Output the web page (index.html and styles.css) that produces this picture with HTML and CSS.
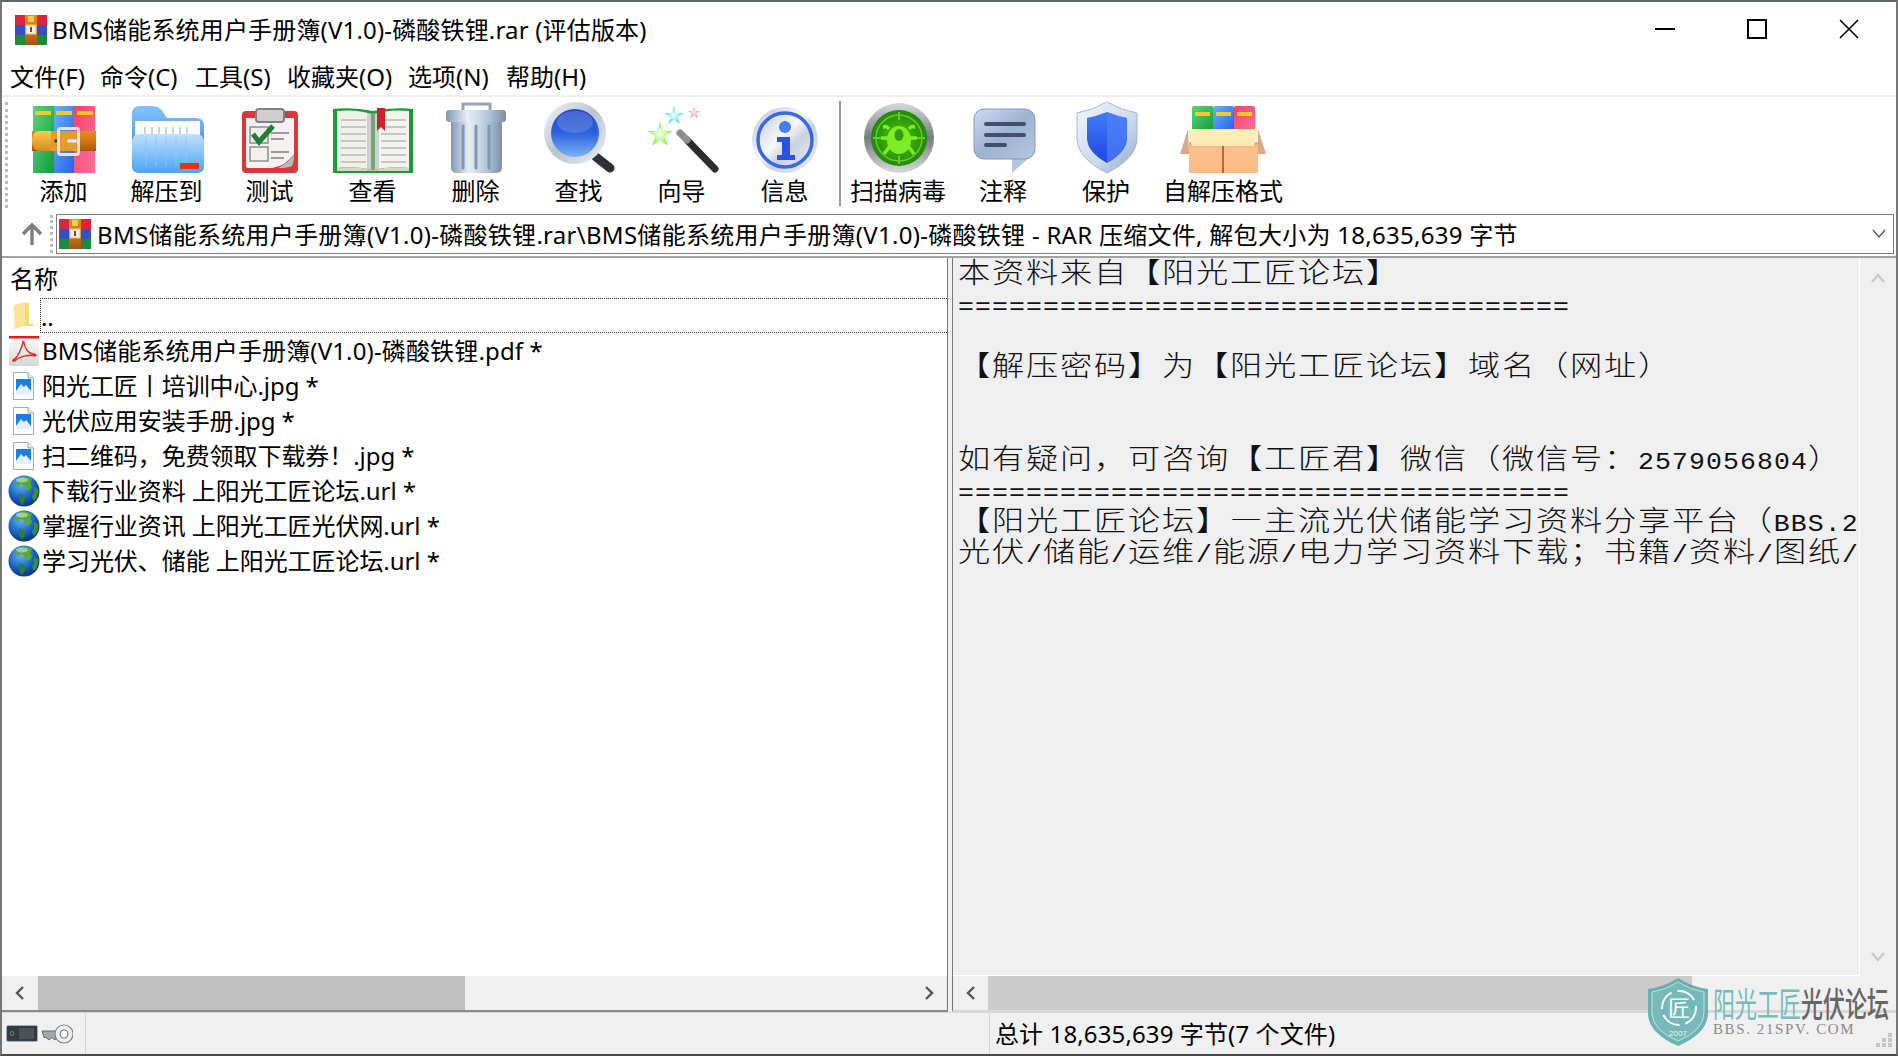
FILE: index.html
```html
<!DOCTYPE html>
<html lang="zh-CN">
<head>
<meta charset="utf-8">
<title>BMS储能系统用户手册簿(V1.0)-磷酸铁锂.rar (评估版本)</title>
<link rel="stylesheet" href="styles.css">
</head>
<body>
<svg class="defs" aria-hidden="true">
  <defs>
    <linearGradient id="gGreen" x1="0" y1="0" x2="1" y2="1"><stop offset="0" stop-color="#55d67a"/><stop offset="1" stop-color="#169a3e"/></linearGradient>
    <linearGradient id="gBlue" x1="0" y1="0" x2="1" y2="1"><stop offset="0" stop-color="#66b2fb"/><stop offset="1" stop-color="#2a60e8"/></linearGradient>
    <linearGradient id="gRed" x1="0" y1="0" x2="1" y2="1"><stop offset="0" stop-color="#f5426a"/><stop offset="1" stop-color="#fb6f9c"/></linearGradient>
    <linearGradient id="gBelt" x1="0" y1="0" x2="0" y2="1"><stop offset="0" stop-color="#e88a1e"/><stop offset=".5" stop-color="#d9750f"/><stop offset="1" stop-color="#a5560c"/></linearGradient>
    <linearGradient id="gBeltL" x1="0" y1="0" x2="0" y2="1"><stop offset="0" stop-color="#fbc851"/><stop offset="1" stop-color="#dc8a1a"/></linearGradient>
    <linearGradient id="gFolder" x1="0" y1="0" x2="0" y2="1"><stop offset="0" stop-color="#bfe0fc"/><stop offset="1" stop-color="#4aa4f6"/></linearGradient>
    <linearGradient id="gFolderTab" x1="0" y1="0" x2="0" y2="1"><stop offset="0" stop-color="#7fc4fb"/><stop offset="1" stop-color="#3b6ff0"/></linearGradient>
    <linearGradient id="gMetalH" x1="0" y1="0" x2="1" y2="0"><stop offset="0" stop-color="#8298b2"/><stop offset=".35" stop-color="#e7eef6"/><stop offset=".7" stop-color="#b4c6da"/><stop offset="1" stop-color="#7c8fa8"/></linearGradient>
    <linearGradient id="gSilver" x1="0" y1="0" x2="1" y2="1"><stop offset="0" stop-color="#f2f5f9"/><stop offset=".5" stop-color="#b9c3cf"/><stop offset="1" stop-color="#eef2f7"/></linearGradient>
    <linearGradient id="gRing" x1="0" y1="0" x2="0" y2="1"><stop offset="0" stop-color="#d5d8dc"/><stop offset=".5" stop-color="#777c80"/><stop offset="1" stop-color="#d8dadc"/></linearGradient>
    <linearGradient id="gInfo" x1="0" y1="0" x2="1" y2="1"><stop offset="0" stop-color="#b9c3d2"/><stop offset=".45" stop-color="#f6f8fb"/><stop offset=".6" stop-color="#c9d2de"/><stop offset="1" stop-color="#f0f3f8"/></linearGradient>
    <linearGradient id="gLens" x1="0" y1="0" x2="0" y2="1"><stop offset="0" stop-color="#2447c4"/><stop offset=".5" stop-color="#2f62de"/><stop offset="1" stop-color="#79b4f6"/></linearGradient>
    <linearGradient id="gBubble" x1="0" y1="0" x2="1" y2="1"><stop offset="0" stop-color="#cfdcf3"/><stop offset=".5" stop-color="#9fb2d2"/><stop offset="1" stop-color="#b8c6de"/></linearGradient>
    <linearGradient id="gShieldOut" x1="0" y1="0" x2="1" y2="1"><stop offset="0" stop-color="#f3f6fb"/><stop offset=".6" stop-color="#c9d9ef"/><stop offset="1" stop-color="#8ca2c2"/></linearGradient>
    <linearGradient id="gShield" x1="0" y1="0" x2="0" y2="1"><stop offset="0" stop-color="#3f7df5"/><stop offset="1" stop-color="#1f46e6"/></linearGradient>
    <linearGradient id="gCream" x1="0" y1="0" x2="0" y2="1"><stop offset="0" stop-color="#fff2b8"/><stop offset="1" stop-color="#fbe7b4"/></linearGradient>
    <linearGradient id="gBox" x1="0" y1="0" x2="0" y2="1"><stop offset="0" stop-color="#eaa877"/><stop offset=".2" stop-color="#fdbf8c"/><stop offset="1" stop-color="#fdbc85"/></linearGradient>
    <linearGradient id="gPdf" x1="0" y1="0" x2="0" y2="1"><stop offset="0" stop-color="#fff"/><stop offset="1" stop-color="#d5d5d5"/></linearGradient>
    <radialGradient id="gStarG"><stop offset="0" stop-color="#fff"/><stop offset="1" stop-color="#80ee30"/></radialGradient>
    <radialGradient id="gStarC"><stop offset="0" stop-color="#fff"/><stop offset="1" stop-color="#3fd8f6"/></radialGradient>
    <radialGradient id="gStarP"><stop offset="0" stop-color="#fff0f0"/><stop offset="1" stop-color="#f08a90"/></radialGradient>
    <radialGradient id="gScan"><stop offset="0" stop-color="#4cc410"/><stop offset="1" stop-color="#1f8a08"/></radialGradient>
    <radialGradient id="gGlobe" cx=".4" cy=".3" r=".75"><stop offset="0" stop-color="#63b4f3"/><stop offset=".6" stop-color="#1560c0"/><stop offset="1" stop-color="#0a2c78"/></radialGradient>
    <symbol id="i-rar-small" viewBox="0 0 32 30">
      <rect width="32" height="10" fill="#d8263f"/>
      <rect y="10" width="32" height="10" fill="#3550c4"/>
      <rect y="20" width="32" height="10" fill="#1e8a3e"/>
      <rect x="10" width="12" height="30" fill="url(#gBelt)"/>
      <rect x="11" y="10" width="10" height="9" fill="#f7efd8" stroke="#d9c79a"/>
      <rect x="15" y="12" width="2" height="5" fill="#7a4a18"/>
      <rect x="13" y="1" width="6" height="6" fill="#fbc851"/>
    </symbol>
    <symbol id="i-image" viewBox="0 0 21 28">
      <path d="M.5.5H15L20.5 6V27.5H.5Z" fill="#fff" stroke="#a9a9a9"/>
      <path d="M15 .5V6H20.5" fill="#e6e6e6" stroke="#a9a9a9"/>
      <rect x="3" y="7" width="15" height="15" fill="#1a7ee6"/>
      <path d="M3 19L8 12L11 15L13 13L18 19V22H3Z" fill="#e4f1fd"/>
    </symbol>
    <symbol id="i-globe" viewBox="0 0 32 32">
      <circle cx="16" cy="16" r="15.5" fill="url(#gGlobe)"/>
      <path d="M9 4C13 1 20 1 24 4L22 8L24 12L20 16L17 14L16 10L12 9L11 12L8 10Z" fill="#5aa83a"/>
      <path d="M26 12L30 14C31 18 29 23 26 26L24 22L26 18Z" fill="#3f8f2e"/>
      <path d="M11 18L16 20L17 25L14 30L11 25Z" fill="#2f7f2a"/>
      <ellipse cx="14" cy="5" rx="6" ry="2.5" fill="#fff" opacity=".45"/>
    </symbol>
  </defs>
</svg>

<div class="window">
  <header class="titlebar">
    <svg class="title-icon"><use href="#i-rar-small"/></svg>
    <span class="title-text">BMS储能系统用户手册簿(V1.0)-磷酸铁锂.rar (评估版本)</span>
    <div class="controls">
      <button class="ctl"><svg width="20" height="20" viewBox="0 0 20 20"><path d="M0 10H20" stroke="#000" stroke-width="2"/></svg></button>
      <button class="ctl"><svg width="20" height="20" viewBox="0 0 20 20"><rect x="1" y="1" width="18" height="18" fill="none" stroke="#000" stroke-width="2"/></svg></button>
      <button class="ctl"><svg width="20" height="20" viewBox="0 0 20 20"><path d="M1 1L19 19M19 1L1 19" stroke="#000" stroke-width="1.6"/></svg></button>
    </div>
  </header>

  <nav class="menubar">
    <span class="menu m1">文件(F)</span><span class="menu m2">命令(C)</span><span class="menu m3">工具(S)</span><span class="menu m4">收藏夹(O)</span><span class="menu m5">选项(N)</span><span class="menu m6">帮助(H)</span>
  </nav>

  <div class="toolbar">
    <i class="grip"></i>
    <div class="tool">
      <svg class="tool-icon" viewBox="0 0 90 72"><g transform="translate(13 4)">
        <rect x="1" width="21" height="67" fill="url(#gGreen)"/><rect x="22" width="20" height="67" fill="url(#gBlue)"/><rect x="42" width="21" height="67" fill="url(#gRed)"/>
        <rect x="3" y="5" width="16" height="4" fill="#f0c92a"/><rect x="24" y="5" width="16" height="4" fill="#f0c92a"/><rect x="45" y="5" width="16" height="4" fill="#f0c92a"/>
        <rect y="25" width="64" height="20" fill="url(#gBelt)"/>
        <path d="M8 25H20V45H8C2 45 0 40 0 35S2 25 8 25Z" fill="url(#gBeltL)"/>
        <rect x="19" y="25" width="27" height="20" fill="#eb9a24"/>
        <circle cx="24" cy="35" r="1.8" fill="#5a3208"/>
        <rect x="26.5" y="22.5" width="20" height="26" rx="2" fill="none" stroke="#e4e4e4" stroke-width="3"/>
        <rect x="35" y="33" width="10" height="4" rx="1" fill="#e8e8e8" stroke="#9c9c9c" stroke-width=".6"/>
      </g></svg>
      <span>添加</span>
    </div>
    <div class="tool">
      <svg class="tool-icon" viewBox="0 0 90 72"><g transform="translate(10 4)">
        <path d="M0 8Q0 0 8 0H21Q27 0 31 6L35 12H64Q72 12 72 20V60Q72 67 64 67H8Q0 67 0 60Z" fill="url(#gFolderTab)"/>
        <rect x="3" y="15" width="65" height="30" fill="#fff"/>
        <path d="M13 21V30M20 21V30M27 21V30M34 21V30M41 21V30M48 21V30M55 21V30" stroke="#c9d2da" stroke-width="2"/>
        <path d="M0 37Q0 28 8 28H64Q72 28 72 37V58Q72 67 63 67H9Q0 67 0 58Z" fill="url(#gFolder)"/>
        <path d="M14 30V60M24 30V60M34 30V60M44 30V60M54 30V60" stroke="#8fc6f7" stroke-width="1.5" opacity=".6"/>
        <rect x="48" y="57" width="19" height="6" fill="#e8301a"/>
      </g></svg>
      <span>解压到</span>
    </div>
    <div class="tool">
      <svg class="tool-icon" viewBox="0 0 90 72"><g transform="translate(17 6)">
        <rect y="3" width="56" height="62" rx="4" fill="#d8393a"/>
        <path d="M4 10H52V46Q44 58 30 60H6Q4 60 4 58Z" fill="#f4f2f0"/>
        <path d="M52 46Q48 54 36 60Q46 60 50 58Q52 54 52 46Z" fill="#bbb"/>
        <rect x="14" y="1" width="28" height="13" rx="3" fill="#cfcfcf" stroke="#808080" stroke-width="2"/>
        <rect x="8" y="19" width="18" height="16" fill="#eee" stroke="#8f8f8f" stroke-width="1.5"/>
        <rect x="8" y="39" width="18" height="14" fill="#f2f0ee" stroke="#8f8f8f" stroke-width="1.5"/>
        <path d="M11 26L17 34L31 18" fill="none" stroke="#1d7f2e" stroke-width="5"/>
        <path d="M29 25H47M29 31H42M29 44H47M29 50H42" stroke="#a19a96" stroke-width="2"/>
      </g></svg>
      <span>测试</span>
    </div>
    <div class="tool">
      <svg class="tool-icon" viewBox="0 0 90 72"><g transform="translate(5 6)">
        <path d="M0 1Q20 -1 40 3Q60 -1 80 1V65H0Z" fill="#1f9a3a"/>
        <path d="M4 3Q24 1 38 6V62Q24 58 4 60Z" fill="#f1f1ec"/>
        <path d="M76 3Q56 1 42 6V62Q56 58 76 60Z" fill="#f4f4ef"/>
        <path d="M4 60Q24 58 38 62H42Q56 58 76 60V63H4Z" fill="#d5d5d0"/>
        <rect x="34" y="5" width="12" height="58" fill="#b4b4b0" opacity=".55"/>
        <path d="M8 12H33M8 19H33M8 26H33M8 33H33M8 40H33M8 47H33M8 54H33M48 12H73M48 19H73M48 26H73M48 33H73M48 40H73M48 47H73M48 54H73" stroke="#c6c6c2" stroke-width="2"/>
        <path d="M44 0H52V23L48 19L44 23Z" fill="#c8242a"/>
      </g></svg>
      <span>查看</span>
    </div>
    <div class="tool">
      <svg class="tool-icon" viewBox="0 0 90 72"><g transform="translate(15 0)">
        <path d="M17 9V2H44V9" fill="none" stroke="#93a5bb" stroke-width="3"/>
        <rect y="8" width="60" height="12" rx="3" fill="url(#gMetalH)"/>
        <path d="M5 20H56V65Q56 71 50 71H11Q5 71 5 65Z" fill="url(#gMetalH)"/>
        <path d="M17 24V66M30 24V66M43 24V66" stroke="#7f97b5" stroke-width="3" stroke-linecap="round"/>
      </g></svg>
      <span>删除</span>
    </div>
    <div class="tool">
      <svg class="tool-icon" viewBox="0 0 90 72">
        <path d="M62 55L76 66" stroke="#2b3136" stroke-width="9" stroke-linecap="round"/>
        <circle cx="41" cy="31" r="31" fill="url(#gSilver)"/>
        <circle cx="41" cy="31" r="24" fill="url(#gLens)"/>
        <ellipse cx="41" cy="20" rx="18" ry="11" fill="#fff" opacity=".16"/>
      </svg>
      <span>查找</span>
    </div>
    <div class="tool">
      <svg class="tool-icon" viewBox="0 0 90 72">
        <polygon transform="translate(23 33) scale(13)" fill="url(#gStarG)" points="0,-1 .24,-.31 .95,-.31 .38,.12 .59,.81 0,.38 -.59,.81 -.38,.12 -.95,-.31 -.24,-.31"/>
        <polygon transform="translate(37 14) scale(10)" fill="url(#gStarC)" points="0,-1 .24,-.31 .95,-.31 .38,.12 .59,.81 0,.38 -.59,.81 -.38,.12 -.95,-.31 -.24,-.31"/>
        <polygon transform="translate(57 11) scale(6.5)" fill="url(#gStarP)" points="0,-1 .24,-.31 .95,-.31 .38,.12 .59,.81 0,.38 -.59,.81 -.38,.12 -.95,-.31 -.24,-.31"/>
        <path d="M50 38L78 67" stroke="#2e2e30" stroke-width="7" stroke-linecap="round"/>
        <path d="M43 31L50 38" stroke="#8f8f90" stroke-width="7" stroke-linecap="round"/>
      </svg>
      <span>向导</span>
    </div>
    <div class="tool">
      <svg class="tool-icon" viewBox="0 0 90 72">
        <circle cx="45" cy="38" r="33" fill="url(#gInfo)"/>
        <circle cx="45" cy="38" r="27" fill="none" stroke="#3b68e6" stroke-width="3.5"/>
        <circle cx="45" cy="25" r="6" fill="#4a7cee"/>
        <path d="M37 35H50V53H55V58H37V53H42V40H37Z" fill="#2c52e2"/>
      </svg>
      <span>信息</span>
    </div>
    <i class="tool-sep"></i>
    <div class="tool tool-scan">
      <svg class="tool-icon" viewBox="0 0 90 72">
        <circle cx="46" cy="36" r="35" fill="url(#gRing)"/>
        <circle cx="46" cy="36" r="28" fill="url(#gScan)"/>
        <circle cx="46" cy="36" r="23" fill="none" stroke="#66c82c" stroke-width="1.5"/>
        <path d="M46 10V18M46 54V62M20 36H28M64 36H72" stroke="#66c82c" stroke-width="2"/>
        <path d="M36 27C33 23 32 25 30 25M56 27C59 23 60 25 62 25M35 36H28M57 36H64M37 44L31 52M55 44L61 52" fill="none" stroke="#7dee22" stroke-width="3.5"/>
        <ellipse cx="46" cy="38" rx="12" ry="14" fill="#7dee22"/>
        <ellipse cx="46" cy="33" rx="4.5" ry="6" fill="#3a9a10"/>
      </svg>
      <span>扫描病毒</span>
    </div>
    <div class="tool tool-note">
      <svg class="tool-icon" viewBox="0 0 90 72">
        <path d="M54 55V71L72 55Z" fill="#b6c5dc"/>
        <rect x="16" y="7" width="61" height="50" rx="10" fill="url(#gBubble)" stroke="#7f98c4"/>
        <path d="M28 22H66M28 33H66M28 43H47" stroke="#414f68" stroke-width="4" stroke-linecap="round"/>
      </svg>
      <span>注释</span>
    </div>
    <div class="tool tool-guard">
      <svg class="tool-icon" viewBox="0 0 90 72">
        <path d="M46 0Q60 8 76 11V36Q76 56 46 71Q16 56 16 36V11Q32 8 46 0Z" fill="url(#gShieldOut)" stroke="#a7b6cc"/>
        <path d="M46 10Q56 14 66 16V36Q66 50 46 61Q26 50 26 36V16Q36 14 46 10Z" fill="url(#gShield)"/>
        <path d="M46 10Q56 14 66 16V36Q66 50 46 61Z" fill="#4f80f7" opacity=".7"/>
      </svg>
      <span>保护</span>
    </div>
    <div class="tool tool-sfx">
      <svg class="tool-icon" viewBox="0 0 90 72">
        <rect x="14" y="4" width="21" height="26" rx="2" fill="url(#gGreen)"/>
        <rect x="35" y="4" width="21" height="26" rx="2" fill="url(#gBlue)"/>
        <rect x="56" y="4" width="21" height="26" rx="2" fill="url(#gRed)"/>
        <rect x="17" y="10" width="15" height="4" fill="#f0c92a"/><rect x="38" y="10" width="15" height="4" fill="#f0c92a"/><rect x="59" y="10" width="15" height="4" fill="#f0c92a"/>
        <path d="M10 27L2 52H11Z" fill="#dca888"/>
        <path d="M80 27L88 52H80Z" fill="#dca888"/>
        <rect x="11" y="40" width="69" height="31" fill="url(#gBox)"/>
        <path d="M10 27H80L76 44H14Z" fill="url(#gCream)"/>
        <path d="M45 44V71" stroke="#b46a3c" stroke-width="2"/>
      </svg>
      <span>自解压格式</span>
    </div>
  </div>

  <div class="addressrow">
    <svg class="up-arrow" width="24" height="24" viewBox="0 0 24 24"><path d="M12 23V3M3 12L12 3L21 12" fill="none" stroke="#7d7d7d" stroke-width="3.4"/></svg>
    <i class="grip grip-addr"></i>
    <div class="address">
      <svg class="addr-icon"><use href="#i-rar-small"/></svg>
      <span class="addr-text">BMS储能系统用户手册簿(V1.0)-磷酸铁锂.rar\BMS储能系统用户手册簿(V1.0)-磷酸铁锂 - RAR 压缩文件, 解包大小为 18,635,639 字节</span>
      <svg class="addr-chevron" width="14" height="10" viewBox="0 0 14 10"><path d="M1 1L7 8L13 1" fill="none" stroke="#555" stroke-width="1.4"/></svg>
    </div>
  </div>

  <main class="panes">
    <section class="files">
      <div class="file-head">名称</div>
      <ul class="file-list">
        <li class="row"><span class="ficon"><svg width="19" height="27" viewBox="0 0 19 27"><path d="M0 3L11 0V24L0 27Z" fill="#fbe39a"/><path d="M11 1H15V22H19V24H11Z" fill="#f8d678"/></svg></span><span class="fname focus">..</span></li>
        <li class="row"><span class="ficon"><svg width="30" height="30" viewBox="0 0 30 30"><rect width="30" height="30" rx="2" fill="url(#gPdf)"/><rect width="30" height="2.5" fill="#d81e1e"/><path d="M14 6C13 11 9 22 4 24C3 25 5 26 7 24C10 21 20 18 26 20C28 20 27 18 24 18C20 18 16 13 15 7C15 5 14 5 14 6Z" fill="none" stroke="#d8302a" stroke-width="1.4"/></svg></span><span class="fname fname-pdf">BMS储能系统用户手册簿(V1.0)-磷酸铁锂.pdf *</span></li>
        <li class="row"><span class="ficon"><svg width="21" height="28"><use href="#i-image"/></svg></span><span class="fname">阳光工匠丨培训中心.jpg *</span></li>
        <li class="row"><span class="ficon"><svg width="21" height="28"><use href="#i-image"/></svg></span><span class="fname">光伏应用安装手册.jpg *</span></li>
        <li class="row"><span class="ficon"><svg width="21" height="28"><use href="#i-image"/></svg></span><span class="fname">扫二维码，免费领取下载券！.jpg *</span></li>
        <li class="row"><span class="ficon"><svg width="32" height="32"><use href="#i-globe"/></svg></span><span class="fname">下载行业资料 上阳光工匠论坛.url *</span></li>
        <li class="row"><span class="ficon"><svg width="32" height="32"><use href="#i-globe"/></svg></span><span class="fname">掌握行业资讯 上阳光工匠光伏网.url *</span></li>
        <li class="row"><span class="ficon"><svg width="32" height="32"><use href="#i-globe"/></svg></span><span class="fname">学习光伏、储能 上阳光工匠论坛.url *</span></li>
      </ul>
      <div class="hscroll">
        <svg class="arrow" width="12" height="14" viewBox="0 0 12 14"><path d="M9 1L3 7L9 13" fill="none" stroke="#555" stroke-width="2.4"/></svg>
        <div class="thumb thumb-left"></div>
        <svg class="arrow arrow-end" width="12" height="14" viewBox="0 0 12 14"><path d="M3 1L9 7L3 13" fill="none" stroke="#555" stroke-width="2.4"/></svg>
      </div>
    </section>
    <i class="splitter"></i>
    <section class="viewer">
      <div class="viewer-main">
        <div class="viewer-text">
          <div class="ln">本资料来自【阳光工匠论坛】</div>
          <div class="ln"><span class="m">====================================</span></div>
          <div class="ln"></div>
          <div class="ln">【解压密码】为【阳光工匠论坛】域名（网址）</div>
          <div class="ln"></div>
          <div class="ln"></div>
          <div class="ln">如有疑问，可咨询【工匠君】微信（微信号：<span class="m">2579056804</span>）</div>
          <div class="ln"><span class="m">====================================</span></div>
          <div class="ln">【阳光工匠论坛】—主流光伏储能学习资料分享平台（<span class="m">BBS.2</span></div>
          <div class="ln">光伏<span class="m">/</span>储能<span class="m">/</span>运维<span class="m">/</span>能源<span class="m">/</span>电力学习资料下载；书籍<span class="m">/</span>资料<span class="m">/</span>图纸<span class="m">/</span></div>
        </div>
        <div class="vscroll">
          <svg width="14" height="10" viewBox="0 0 14 10"><path d="M1 9L7 2L13 9" fill="none" stroke="#c9c9c9" stroke-width="2.4"/></svg>
          <svg width="14" height="10" viewBox="0 0 14 10"><path d="M1 1L7 8L13 1" fill="none" stroke="#c9c9c9" stroke-width="2.4"/></svg>
        </div>
      </div>
      <div class="hscroll hscroll-right">
        <svg class="arrow" width="12" height="14" viewBox="0 0 12 14"><path d="M9 1L3 7L9 13" fill="none" stroke="#555" stroke-width="2.4"/></svg>
        <div class="thumb thumb-right"></div>
      </div>
    </section>
  </main>

  <footer class="statusbar">
    <div class="status-icons">
      <svg width="32" height="17" viewBox="0 0 32 17"><rect x=".5" y=".5" width="31" height="16" rx="1.5" fill="#343a40" stroke="#9db0c4"/><circle cx="6" cy="8.5" r="2" fill="#2f4a2a" stroke="#6b8b5e"/><rect x="13" y="3" width="15" height="11" fill="#4b5156"/></svg>
      <svg width="32" height="20" viewBox="0 0 32 20"><path d="M1 7H19V13H15L14 16L11 13.500L8 16L5 13.500H3Z" fill="#a4a7ab" stroke="#666" stroke-width="1"/><circle cx="23" cy="10" r="9" fill="#eef0f2" stroke="#808489" stroke-width="1.200"/><circle cx="23" cy="10" r="4" fill="#fff" stroke="#75797e" stroke-width="1.200"/></svg>
    </div>
    <div class="status-main">总计 18,635,639 字节(7 个文件)</div>
    <svg class="size-grip" width="17" height="14" viewBox="0 0 17 14"><path d="M12 0h4v4h-4zM6 5h4v4H6zM12 5h4v4h-4zM0 10h4v4H0zM6 10h4v4H6zM12 10h4v4h-4z" fill="#c5c5c5"/></svg>
  </footer>
</div>

<aside class="watermark">
  <svg class="wm-shield" width="60" height="68" viewBox="0 0 60 68">
    <path d="M30 0Q44 9 60 11V35Q60 55 30 68Q0 55 0 35V11Q16 9 30 0Z" fill="#58aba9" fill-opacity=".88"/>
    <path d="M30 4Q42 12 56 14V35Q56 52 30 63Q4 52 4 35V14Q18 12 30 4Z" fill="#75bab8" stroke="#d8eceb" stroke-width=".8"/>
    <circle cx="31" cy="30" r="17" fill="none" stroke="#fff" stroke-width="2" stroke-dasharray="20 6"/>
    <text x="31" y="38" class="wm-seal">匠</text>
    <text x="30" y="58" class="wm-year">2007</text>
  </svg>
  <div class="wm-text">
    <div class="wm-name"><span class="wm-teal">阳光工匠</span><span class="wm-gray">光伏论坛</span></div>
    <div class="wm-url">BBS. 21SPV. COM</div>
  </div>
</aside>
</body>
</html>
```

FILE: styles.css
```css
* { box-sizing: border-box; }
html, body { margin: 0; padding: 0; height: 100%; overflow: hidden; }
body {
  font-family: "Noto Sans", "Noto Sans CJK SC", sans-serif;
  font-size: 24px;
  color: #000;
  background: #fff;
}
.defs { display: block; width: 0; height: 0; overflow: hidden; }
.window {
  width: 1898px;
  height: 1056px;
  display: flex;
  flex-direction: column;
  background: #fff;
  border-top: 2px solid #5f6763;
  border-bottom: 2px solid #4a4a4a;
  border-left: 2px solid #757575;
  border-right: 2px solid #757575;
}
.titlebar { height: 58px; display: flex; align-items: center; padding-left: 13px; flex: none; }
.title-icon { width: 32px; height: 30px; margin-right: 5px; margin-top: -3px; }
.title-text { white-space: nowrap; margin-top: -6px; letter-spacing: .17px; }
.controls { margin-left: auto; display: flex; margin-top: -4px; padding-right: 1px; }
.ctl { width: 92px; height: 40px; padding: 0; border: 0; background: none; display: flex; align-items: center; justify-content: center; }
.menubar { height: 35px; display: flex; align-items: center; flex: none; white-space: nowrap; padding-bottom: 4px; }
.menu { display: block; }
.m1 { margin-left: 8px; width: 90px; }
.m2 { width: 95px; }
.m3 { width: 92px; }
.m4 { width: 121px; }
.m5 { width: 98px; }
.toolbar { height: 117px; flex: none; display: flex; border-top: 2px solid #f0f0f0; padding-top: 5px; }
.grip { display: block; flex: none; width: 3px; margin-left: 3px; margin-right: 4px; border-left: 3px dotted #bdbdbd; height: 106px; }
.grip-addr { height: 38px; margin: 0 2px 0 3px; }
.tool { width: 103px; flex: none; display: flex; flex-direction: column; align-items: center; line-height: 34px; white-space: nowrap; }
.tool-icon { width: 90px; height: 72px; flex: none; }
.tool-sep { display: block; flex: none; width: 2px; height: 105px; margin: -1px 3px 0 3px; background: #9a9a9a; }
.tool-scan { width: 108px; }
.tool-note { width: 102px; }
.tool-guard { width: 104px; }
.tool-sfx { width: 132px; margin-left: -1px; }
.addressrow { height: 44px; flex: none; display: flex; align-items: center; }
.up-arrow { margin-left: 18px; margin-right: 3px; flex: none; }
.address { flex: none; width: 1838px; height: 40px; margin-left: 1px; border: 1px solid #808080; display: flex; align-items: center; background: #fff; }
.addr-icon { width: 32px; height: 30px; margin-left: 2px; margin-right: 6px; flex: none; }
.addr-text { white-space: nowrap; flex: 1; letter-spacing: .28px; margin-top: -2px; }
.addr-chevron { margin-right: 7px; flex: none; }
.panes { flex: 1; min-height: 0; display: flex; border-top: 2px solid #a3a3a3; }
.files { width: 946px; flex: none; display: flex; flex-direction: column; background: #fff; border-right: 1px solid #777; border-bottom: 2px solid #8a8a8a; }
.file-head { height: 40px; flex: none; line-height: 42px; padding-left: 8px; }
.file-list { list-style: none; margin: 0; padding: 0; flex: 1; min-height: 0; }
.row { height: 35px; display: flex; align-items: center; white-space: nowrap; }
.ficon { width: 38px; flex: none; display: flex; justify-content: center; align-items: center; padding-left: 5px; }
.fname { padding-left: 2px; line-height: 35px; letter-spacing: -.06px; }
.fname-pdf { letter-spacing: .15px; }
.focus { flex: 1; height: 35px; padding-left: 0; border: 1px dotted #333; border-right: 0; line-height: 36px; }
.hscroll { height: 34px; flex: none; display: flex; align-items: center; background: #f0f0f0; padding-left: 0; }
.arrow { margin-left: 12px; flex: none; }
.arrow-end { margin-left: auto; margin-right: 12px; }
.thumb { height: 34px; flex: none; }
.thumb-left { width: 427px; margin-left: 12px; background: #bfbfbf; }
.thumb-right { width: 704px; margin-left: 11px; background: #cbcbcb; }
.splitter { display: block; width: 4px; flex: none; background: #f0f0f0; }
.viewer { flex: 1; min-width: 0; display: flex; flex-direction: column; background: #efefef; border-left: 1px solid #777; border-bottom: 2px solid #d8d8d8; }
.viewer-main { flex: 1; min-height: 0; display: flex; }
.viewer-text {
  flex: 1; min-width: 0; overflow: hidden; padding: 0 0 0 5px;
  border-right: 1px solid #fff; border-bottom: 1px solid #fff;
  font-family: "Noto Sans CJK SC", sans-serif;
  font-weight: 300;
  font-size: 28px;
  letter-spacing: 1.56px;
  color: #111;
}
.ln { height: 31px; line-height: 26px; white-space: pre; transform: scaleX(1.15); transform-origin: left; }
.m { font-family: "Liberation Mono", monospace; font-size: 23px; letter-spacing: .98px; font-weight: 400; }
.vscroll { width: 36px; flex: none; display: flex; flex-direction: column; justify-content: space-between; align-items: center; padding: 15px 0 14px; }
.hscroll-right { background: #f0f0f0; }
.statusbar { height: 42px; flex: none; display: flex; align-items: center; background: #f0f0f0; border-top: 1px solid #d8d8d8; }
.status-icons { width: 84px; height: 100%; display: flex; align-items: center; gap: 3px; padding-left: 4px; border-right: 1px solid #d5d5d5; flex: none; }
.status-main { margin-left: 903px; height: 100%; line-height: 42px; padding-left: 5px; border-left: 1px solid #d5d5d5; flex: 1; white-space: nowrap; letter-spacing: .12px; }
.size-grip { flex: none; margin: 12px 3px 0 0; }
.watermark { position: absolute; left: 1648px; top: 978px; display: flex; gap: 5px; }
.wm-shield { flex: none; }
.wm-seal { font-family: "Noto Sans CJK SC", sans-serif; font-size: 22px; fill: #fff; text-anchor: middle; }
.wm-year { font-family: "Liberation Sans", sans-serif; font-size: 8px; fill: #e8f4f3; text-anchor: middle; }
.wm-text { width: 176px; padding-top: 6px; }
.wm-name { height: 36px; white-space: nowrap; font-family: "Noto Sans CJK SC", sans-serif; font-weight: 400; font-size: 22px; line-height: 22px; transform: scaleY(1.55); transform-origin: top; }
.wm-teal { color: #74bdbb; }
.wm-gray { color: #666; font-weight: 500; }
.wm-url { font-family: "Liberation Serif", serif; font-size: 15px; letter-spacing: 1.6px; color: #8a8a8a; line-height: 14px; margin-top: 2px; white-space: nowrap; }
```
